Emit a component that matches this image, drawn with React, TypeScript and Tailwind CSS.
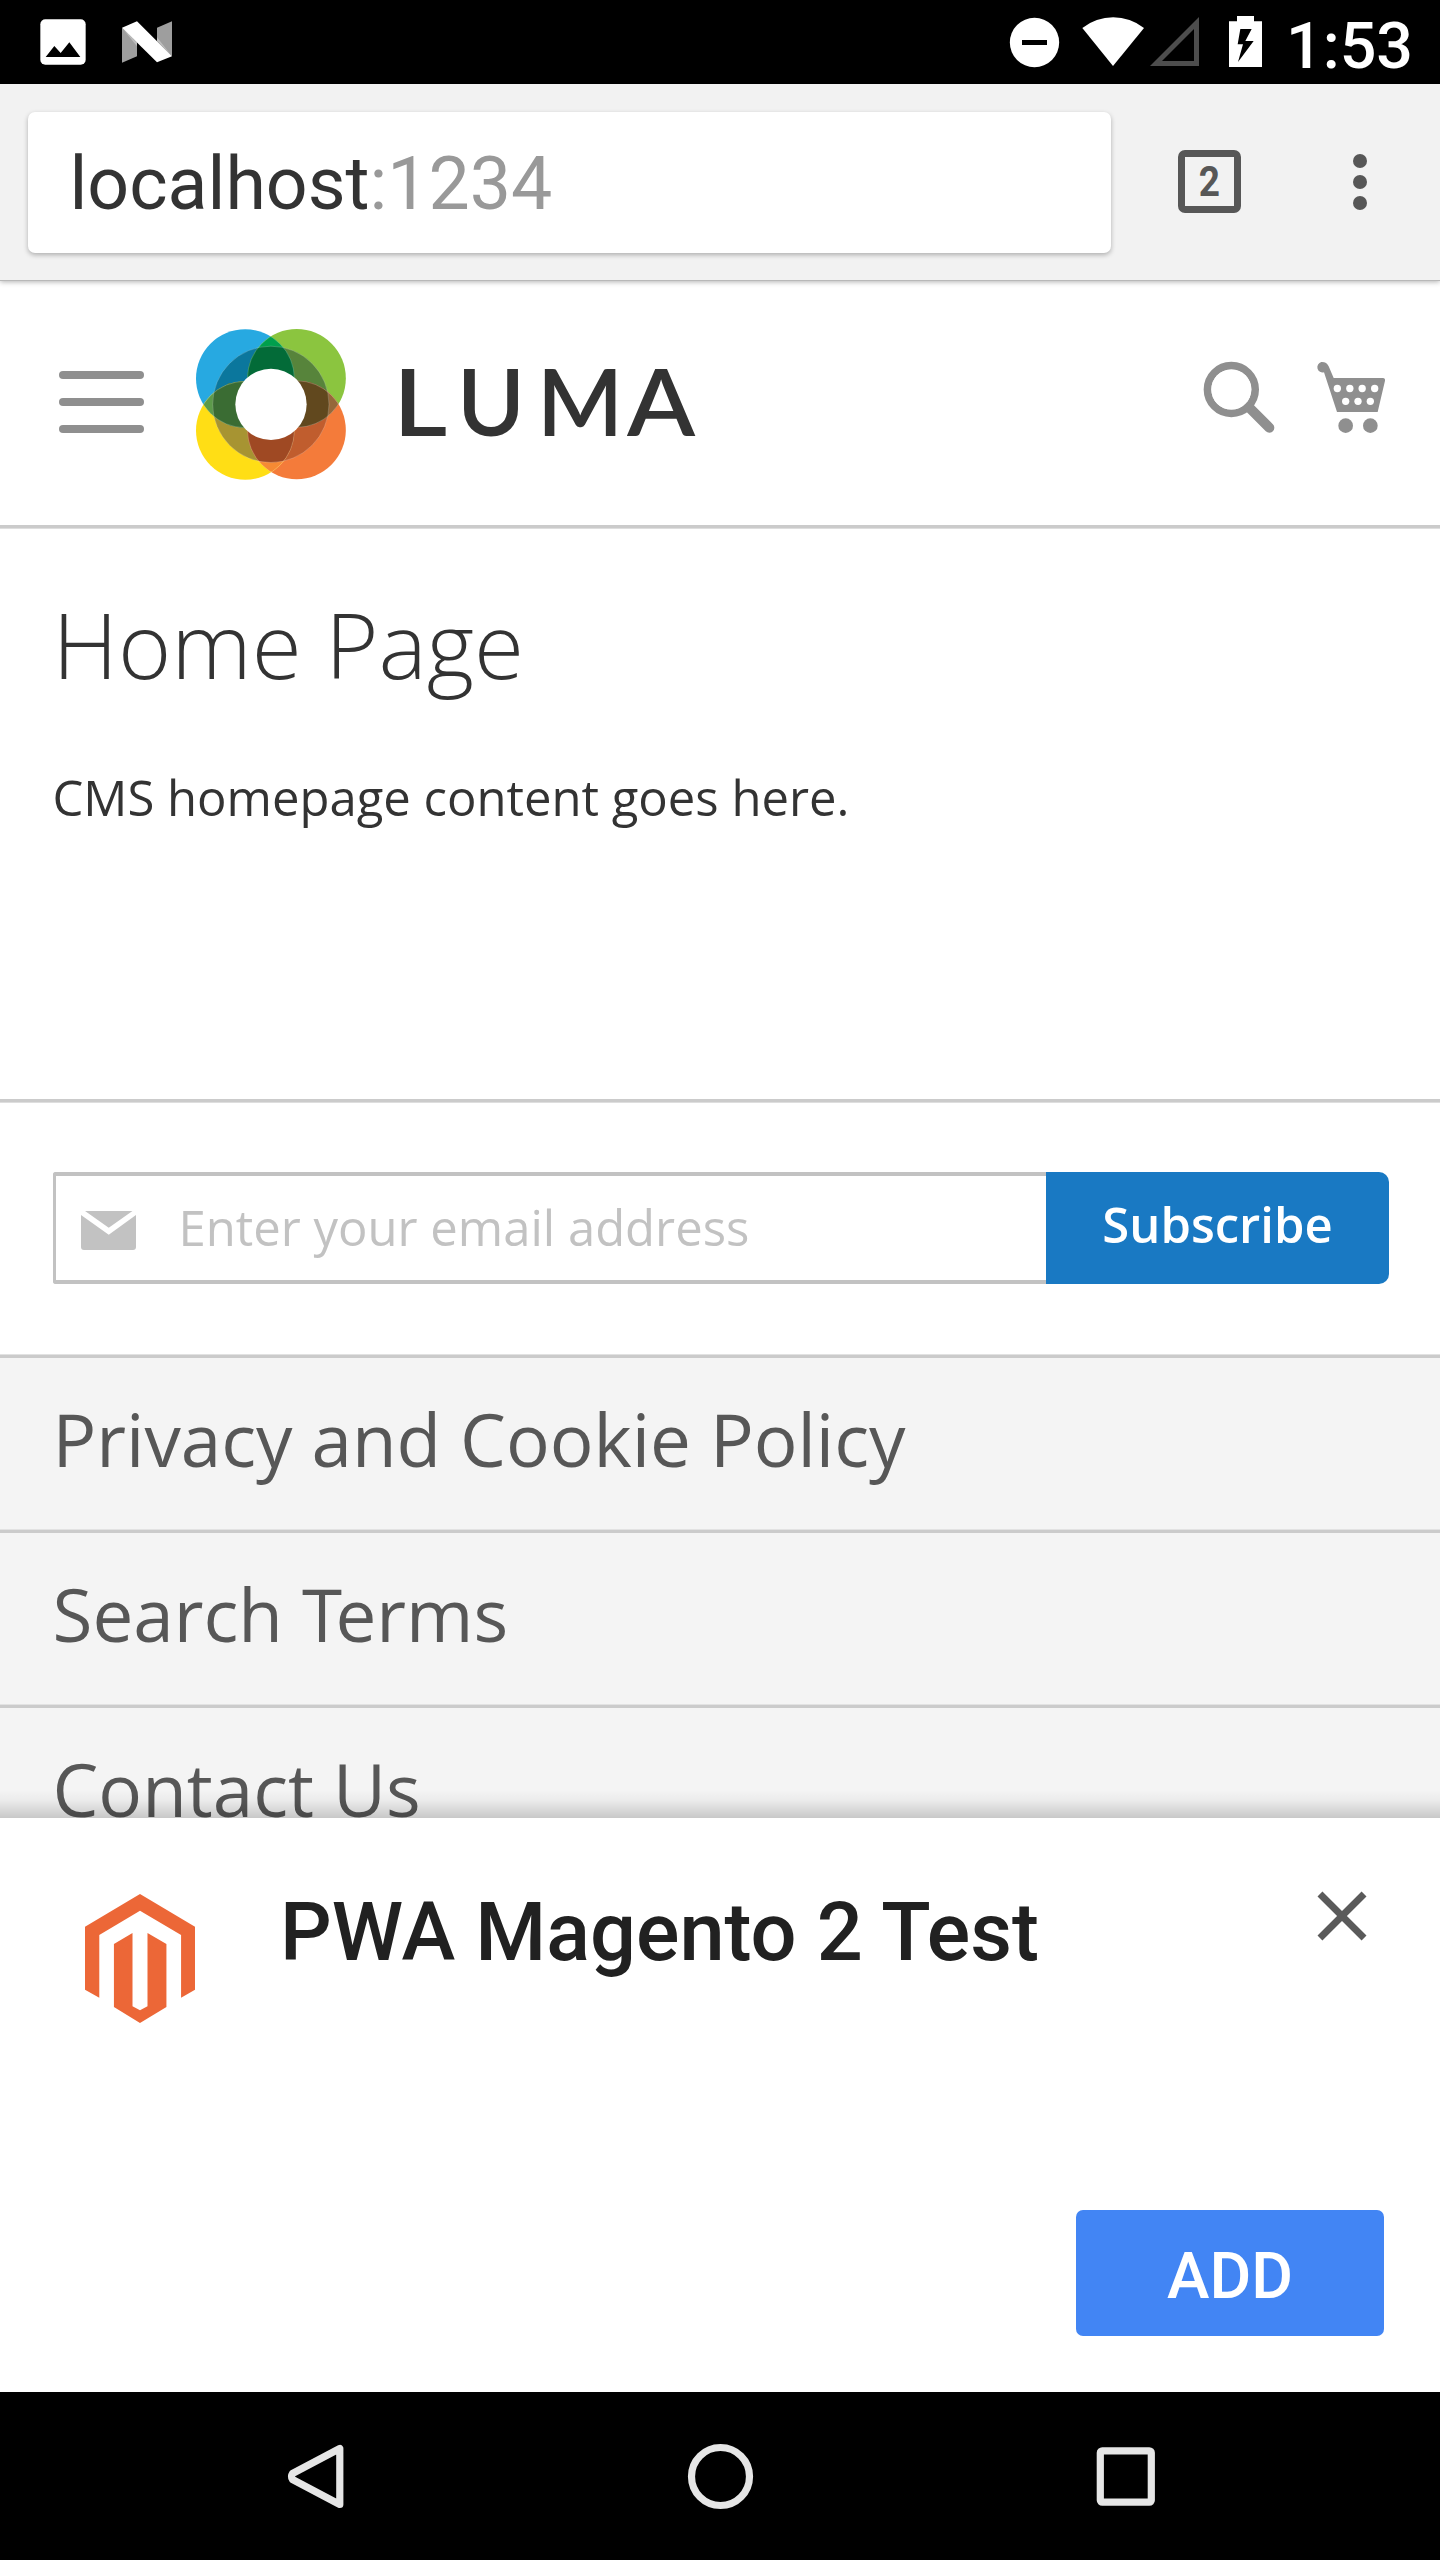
import React from "react";

const INNER = { cx: 812.5, cy: 343, r: 174.5 };
const PETALS = {
  blue: { cx: 735.5, cy: 265.5, r: 147.5 },
  green: { cx: 890, cy: 264.5, r: 147.5 },
  orange: { cx: 890, cy: 420, r: 147.5 },
  yellow: { cx: 735.5, cy: 421.5, r: 147.5 },
};
type Petal = keyof typeof PETALS;

const petals: { id: Petal; fill: string; dark: string }[] = [
  { id: "blue", fill: "#27a9e1", dark: "#0b779d" },
  { id: "green", fill: "#8bc53f", dark: "#57843b" },
  { id: "orange", fill: "#f47b3a", dark: "#c05d2e" },
  { id: "yellow", fill: "#ffde15", dark: "#a79432" },
];

const lenses: { a: Petal; b: Petal; fill: string; dark: string }[] = [
  { a: "blue", b: "green", fill: "#009f4d", dark: "#036b38" },
  { a: "green", b: "orange", fill: "#95683a", dark: "#61481e" },
  { a: "orange", b: "yellow", fill: "#f68a33", dark: "#9f4923" },
  { a: "yellow", b: "blue", fill: "#5c9a4a", dark: "#3a6c33" },
];

function LumaMark() {
  const line = { fill: "none", stroke: "#fff", strokeOpacity: 0.3, strokeWidth: 2 };
  return (
    <svg className="h-[151px] w-[150px]" viewBox="588 117 450 453">
      <defs>
        {petals.map((p) => (
          <clipPath key={p.id} id={`petal-${p.id}`}>
            <circle {...PETALS[p.id]} />
          </clipPath>
        ))}
        <clipPath id="inner">
          <circle {...INNER} />
        </clipPath>
      </defs>
      {petals.map((p) => (
        <circle key={p.id} {...PETALS[p.id]} fill={p.fill} />
      ))}
      {petals.map((p) => (
        <circle key={p.id} {...INNER} fill={p.dark} clipPath={`url(#petal-${p.id})`} />
      ))}
      {lenses.map((l) => (
        <g key={l.a} clipPath={`url(#petal-${l.a})`}>
          <circle {...PETALS[l.b]} fill={l.fill} />
          <g clipPath="url(#inner)">
            <circle {...PETALS[l.b]} fill={l.dark} />
          </g>
          <circle {...PETALS[l.b]} {...line} />
        </g>
      ))}
      {lenses.map((l) => (
        <g key={l.a} clipPath={`url(#petal-${l.b})`}>
          <circle {...PETALS[l.a]} {...line} />
        </g>
      ))}
      <circle {...INNER} {...line} />
      <circle cx="813" cy="343" r="107" fill="#fff" />
    </svg>
  );
}

function StatusBar() {
  return (
    <div className="flex h-[84px] shrink-0 bg-black pl-9">
      <svg className="h-[84px] w-[54px]" viewBox="108 0 162 252">
        <rect x="121" y="58" width="136" height="136" rx="15" fill="#fff" />
        <path d="M137 171L163 138L182 159L208 127L241 171Z" />
      </svg>
      <svg className="ml-[30px] h-[84px] w-[54px]" viewBox="360 0 162 252">
        <path d="M366 83L411 128V169L366 188ZM471 83L516 64V169L471 121Z" fill="#9e9e9e" />
        <path d="M366 83L411 128V139ZM516 169L471 124V112Z" fill="#bdbdbd" />
        <path d="M366 83L411 64L516 169L471 187Z" fill="#fff" />
      </svg>
      <svg className="ml-[834px] h-[84px] w-[52px]" viewBox="144 0 156 252">
        <circle cx="223.5" cy="127.5" r="74" fill="#fff" />
        <rect x="186" y="120" width="75" height="15" />
      </svg>
      <svg className="ml-5 h-[84px] w-[66px]" viewBox="360 0 198 252">
        <path d="M459 198L367 84A150 150 0 0 1 552 84Z" fill="#fff" />
      </svg>
      <svg className="ml-[3px] h-[84px] w-[52px]" viewBox="567 0 156 252">
        <path d="M570 198L717 51V198ZM606 183H702V87Z" fill="#4d4d4d" fillRule="evenodd" />
      </svg>
      <svg className="ml-[26px] h-[84px] w-9" viewBox="801 0 108 252">
        <path
          d="M807 64H831V48H882V64H906V201H807ZM841 87L833 133H849L834 186L881 123H856L875 87Z"
          fill="#fff"
          fillRule="evenodd"
        />
      </svg>
      <div className="ml-[23px] pt-px text-[64.5px] leading-[90px] font-medium text-white">1:53</div>
    </div>
  );
}

function BrowserBar() {
  return (
    <div className="relative z-10 flex h-[196px] shrink-0 bg-[#f2f2f2] pt-7 pl-7 shadow-[0_1px_0_#b8b8b8,0_2px_5px_rgba(0,0,0,0.3)]">
      <div className="flex h-[141px] w-[1083px] rounded-[7px] bg-white pl-[41.5px] text-[73.4px] leading-[144px] text-[#333] shadow-[0_2px_5px_rgba(0,0,0,0.28)]">
        <span>
          localhost<span className="text-[#999]">:1234</span>
        </span>
      </div>
      <div className="mt-[38px] ml-[67px] flex size-[63px] items-center justify-center rounded-[7px] border-[7px] border-[#575757] text-[43px] leading-none font-bold text-[#575757]">
        <span className="scale-x-[0.86]">2</span>
      </div>
      <div className="mt-[42px] ml-[112px] flex flex-col gap-[7px]">
        <i className="size-[14px] rounded-full bg-[#575757]" />
        <i className="size-[14px] rounded-full bg-[#575757]" />
        <i className="size-[14px] rounded-full bg-[#575757]" />
      </div>
    </div>
  );
}

function RuleBelow() {
  return <div className="h-1 shrink-0 border-t-[3px] border-b border-t-[#cbcbcb] border-b-[#dedede]" />;
}

function RuleAbove() {
  return <div className="h-1 shrink-0 border-t border-b-[3px] border-t-[#e2e2e2] border-b-[#cbcbcb]" />;
}

function SiteHeader() {
  return (
    <header className="flex h-[245px] shrink-0 pl-[59px]">
      <div className="flex flex-col gap-[19px] pt-[91px]">
        <i className="h-2 w-[85px] rounded-full bg-[#8f8f8f]" />
        <i className="h-2 w-[85px] rounded-full bg-[#8f8f8f]" />
        <i className="h-2 w-[85px] rounded-full bg-[#8f8f8f]" />
      </div>
      <div className="mt-[49px] ml-[52px]">
        <LumaMark />
      </div>
      <div className="mt-[71px] ml-[47px] flex w-[321px] font-['Lato',sans-serif] text-[92px] leading-[100px] font-semibold text-[#333]">
        <span className="w-[64px] origin-left scale-x-[1.14]">L</span>
        <span className="w-[80px]">U</span>
        <span className="w-[90px]">M</span>
        <span className="origin-left scale-x-[1.08]">A</span>
      </div>
      <svg className="mt-[80px] ml-[486px] h-[75px] w-[75px]" viewBox="180 120 225 225">
        <circle cx="274" cy="208.5" r="71.5" fill="none" stroke="#8f8f8f" strokeWidth="23" />
        <path d="M326 261L388 323" stroke="#8f8f8f" strokeWidth="30" strokeLinecap="round" />
        <circle cx="274" cy="208.5" r="60" fill="#fff" />
      </svg>
      <svg className="mt-[80px] ml-[40px] h-[75px] w-[75px]" viewBox="525 120 225 225">
        <path
          d="M544 126Q560 125 566 139L581 174H729Q736 174 735 182L713 276H591L552 157A16 16 0 1 1 544 126Z"
          fill="#8f8f8f"
        />
        {[592, 629.5, 666.5, 704].map((x) => (
          <circle key={x} cx={x} cy="205.5" r="11" fill="#fff" />
        ))}
        {[617, 654, 691].map((x) => (
          <circle key={x} cx={x} cy="244" r="11" fill="#fff" />
        ))}
        <circle cx="617" cy="317" r="22" fill="#8f8f8f" />
        <circle cx="691" cy="317" r="22" fill="#8f8f8f" />
      </svg>
    </header>
  );
}

function Newsletter() {
  return (
    <div className="h-[251px] shrink-0 pt-[69px] pl-[53px]">
      <div className="flex h-[112px] w-[1336px]">
        <div className="flex w-[993px] rounded-l-[3px] border-y-4 border-l-[3px] border-[#c2c2c2] pl-[25px]">
          <svg
            className="mt-[35px] h-[39px] w-[55px]"
            viewBox="158 393 109 117"
            preserveAspectRatio="none"
          >
            <path
              d="M166 393H260L213 443ZM158 405L213 464L267 405V501Q267 510 261 510H164Q158 510 158 501Z"
              fill="#c2c2c2"
            />
          </svg>
          <span className="mt-4 ml-[42.5px] text-[49px] leading-[70px] text-[#c2c2c2]">
            Enter your email address
          </span>
        </div>
        <button className="w-[343px] rounded-r-[10px] bg-[#1979c3] pb-2 text-[49px] leading-[70px] font-semibold text-white">
          Subscribe
        </button>
      </div>
    </div>
  );
}

function FooterLink({ children }: { children: React.ReactNode }) {
  return (
    <div className="shrink-0">
      <RuleAbove />
      <div className="h-[171px] bg-[#f4f4f4] pt-[31px] pl-[52.5px] text-[72.8px] leading-[100px] text-[#575757]">
        {children}
      </div>
    </div>
  );
}

function InstallSheet() {
  return (
    <div className="relative flex h-[574px] shrink-0 flex-col bg-white">
      <div className="absolute -top-7 left-0 h-7 w-full bg-[linear-gradient(to_bottom,rgba(0,0,0,0),rgba(0,0,0,0.035)_36%,rgba(0,0,0,0.18))]" />
      <div className="flex pl-[85px]">
        <svg
          className="mt-[76px] h-[129px] w-[110px]"
          viewBox="238 341 308 387"
          preserveAspectRatio="none"
        >
          <path
            d="M392 341L546 439V628L507 652V464L392 391L278 464V652L238 628V439ZM371 458L319 491V680L392 728L466 680V491L413 458V678L392 690L371 678Z"
            fill="#ec6737"
          />
        </svg>
        <div className="mt-[65px] ml-[85px] w-[940px] text-[81.1px] leading-[100px] font-medium text-[#212121]">
          PWA Magento 2 Test
        </div>
        <svg className="mt-[56px] ml-20 size-[84px]" viewBox="0 0 24 24">
          <path
            d="M19 6.41L17.59 5 12 10.59 6.41 5 5 6.41 10.59 12 5 17.59 6.41 19 12 13.41 17.59 19 19 17.59 13.41 12z"
            fill="#5a5a5a"
          />
        </svg>
      </div>
      <button className="mt-auto mr-14 mb-14 h-[126px] w-[308px] self-end rounded-[7px] bg-[#4285f4] pt-[7px] text-[64px] leading-[100px] font-medium text-white">
        ADD
      </button>
    </div>
  );
}

function NavBar() {
  const line = { fill: "none", stroke: "#e6e6e6", strokeWidth: 7.2 };
  return (
    <div className="flex h-[168px] shrink-0 items-center bg-black pl-[284px]">
      <svg className="h-[72px] w-[64px]" viewBox="284 2440 64 72">
        <path d="M339.8 2448.5V2504.5L292.5 2479.5Q290.5 2476.5 292.5 2473.5Z" {...line} strokeLinejoin="round" />
      </svg>
      <svg className="ml-[336px] h-[72px] w-[72px]" viewBox="684 2440 72 72">
        <circle cx="720.5" cy="2476.5" r="29" {...line} />
      </svg>
      <svg className="ml-[336px] h-[72px] w-[72px]" viewBox="1092 2440 72 72">
        <rect x="1100.3" y="2450.8" width="51" height="51.4" rx="2" {...line} />
      </svg>
    </div>
  );
}

export default function App() {
  return (
    <div className="flex h-[2560px] w-[1440px] flex-col overflow-hidden bg-white font-['Roboto',sans-serif]">
      <StatusBar />
      <BrowserBar />
      <main className="flex h-[1538px] shrink-0 flex-col overflow-hidden bg-white font-['Open_Sans',sans-serif]">
        <SiteHeader />
        <RuleBelow />
        <section className="h-[570px] shrink-0 pt-[65px] pl-[52.5px] text-[#333]">
          <h1 className="text-[91px] leading-[100px] font-light">Home Page</h1>
          <p className="mt-[68px] text-[49px] leading-[70px]">CMS homepage content goes here.</p>
        </section>
        <RuleBelow />
        <Newsletter />
        <FooterLink>Privacy and Cookie Policy</FooterLink>
        <FooterLink>
          Search <span className="tracking-[-0.09em]">T</span>erms
        </FooterLink>
        <FooterLink>Contact Us</FooterLink>
      </main>
      <InstallSheet />
      <NavBar />
    </div>
  );
}
